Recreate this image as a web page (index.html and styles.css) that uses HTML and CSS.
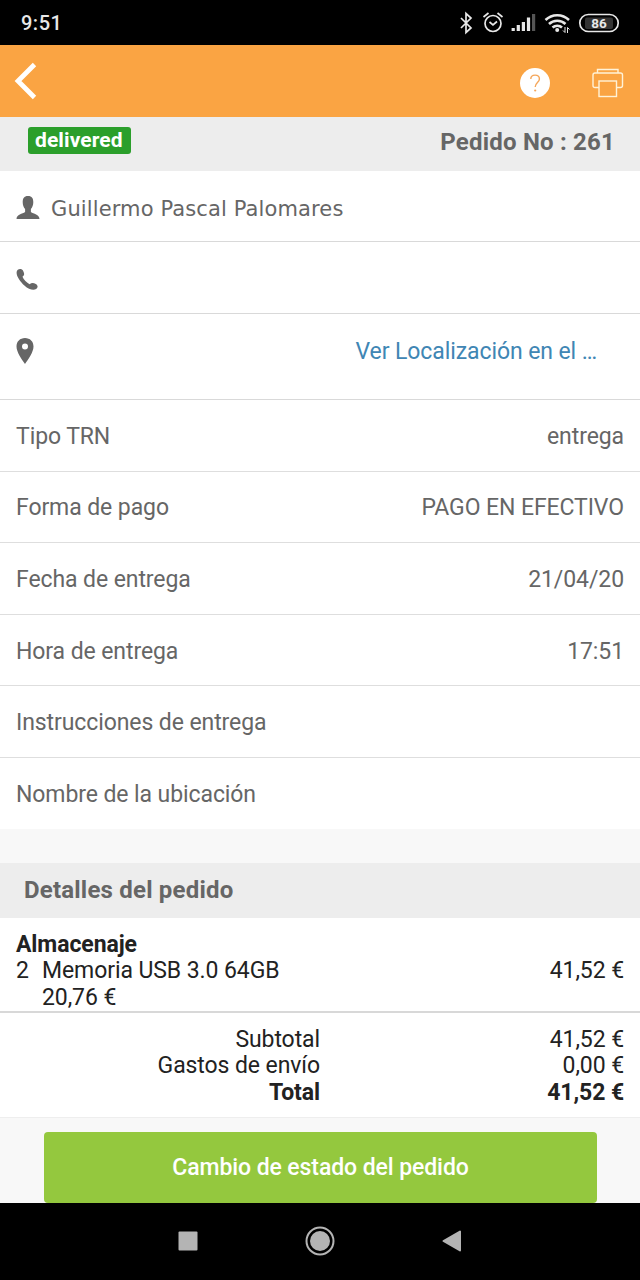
FILE: index.html
```
<!DOCTYPE html>
<html lang="es">
<head>
    <meta charset="UTF-8">
    <meta name="viewport" content="width=device-width, initial-scale=1.0">
    <title>Pedido No : 261</title>
    <link rel="stylesheet" href="styles.css">
</head>
<body>
    <div class="status-bar">
        <span class="clock">9:51</span>
        <svg class="status-icons" width="162" height="24" viewBox="0 0 162 24" fill="none" stroke="#e8e8e8" stroke-width="1.7">
            <!-- bluetooth -->
            <path d="M3 7l10 10-5 4.500V2.500L13 7 3 17"/>
            <!-- alarm -->
            <circle cx="35" cy="12.500" r="8"/>
            <path d="M31.500 11l3.500 3 4-3.500M25.500 6l5-4M39.500 2l5 4"/>
            <!-- signal -->
            <g stroke-width="3.200">
                <path d="M55.200 20v-3M60.300 20v-6M65.400 20v-9M70.500 20V6.500"/>
                <path d="M75.600 20V3" stroke="#555"/>
            </g>
            <!-- wifi -->
            <g stroke-width="2.500">
                <path d="M87.500 9c6.500-6.500 17-6.500 23.500 0M91 13c4.500-4.500 12-4.500 16.500 0M94.500 16.500c2.700-2.500 7-2.500 9.500 0"/>
            </g>
            <circle cx="99.200" cy="19" r="2" fill="#e8e8e8" stroke="none"/>
            <path d="M107 16v5.500l-2-2M109.500 22v-5.500l2 2" stroke-width="1"/>
            <!-- battery -->
            <rect x="121.800" y="3.500" width="38.400" height="17" rx="8.500"/>
            <rect x="127" y="6.500" width="28" height="11.500" rx="2" fill="#333" stroke="none"/>
            <text x="141" y="16.800" class="battery-text">86</text>
        </svg>
    </div>

    <div class="navbar">
        <svg class="back" width="24" height="40" viewBox="0 0 24 40">
            <path d="M21.500 3.500L5 20l16.500 16.500" fill="none" stroke="#fff" stroke-width="4.800"/>
        </svg>
        <div class="nav-actions">
            <svg width="30" height="30" viewBox="0 0 30 30">
                <circle cx="15" cy="15" r="15" fill="#fff"/>
                <path d="M10.800 11c0-5.200 8.600-5.200 8.600 0 0 3.500-4.200 3.700-4.200 8" fill="none" stroke="#f5a65a" stroke-width="1.400"/>
                <circle cx="15.200" cy="22.500" r="1.100" fill="#f5a65a"/>
            </svg>
            <svg width="32" height="30" viewBox="0 0 32 30" fill="none" stroke="#fff2d8" stroke-width="1.400">
                <path d="M5.500 5V1.500h20.500V5M7 19.500H3Q1 19.500 1 17.500V7q0-2 2-2h25.500q2 0 2 2v10.500q0 2-2 2H25"/>
                <rect x="7" y="13" width="17.500" height="15.500"/>
            </svg>
        </div>
    </div>

    <div class="order-header">
        <span class="badge">delivered</span>
        <span class="order-number">Pedido No : 261</span>
    </div>

    <div class="contact">
        <div class="contact-row name-row">
            <svg width="24" height="24" viewBox="0 0 24 24" fill="#666">
                <path d="M12 0c4 0 5.300 2.500 5.300 6 0 3-1 5.500-2.400 7v3c2.500 1.800 8.600 2.500 8.600 7H.5c0-4.500 6-5.200 8.600-7v-3C7.600 11.500 6.700 9 6.700 6 6.700 2.500 8 0 12 0z"/>
            </svg>
            <span class="name">Guillermo Pascal Palomares</span>
        </div>
        <div class="contact-row phone-row">
            <svg width="24" height="24" viewBox="0 0 24 24" fill="#666">
                <path d="M1.500 2C3.500.5 6 .8 7.200 3c1.400 2.700 1.300 4.300-.7 5.700 1.200 3 4.200 6 7.100 7.500 1.900-1.700 3.900-1.600 6.200-.3 2.500 1.500 2.200 3.800.3 5.200-2.600 1.800-7.400.4-11.700-3.600C3.500 13-1.500 5.500 1.500 2z"/>
            </svg>
        </div>
        <div class="contact-row address-row">
            <svg width="18" height="28" viewBox="0 0 18 28" fill="#666">
                <path fill-rule="evenodd" d="M9 1c5 0 8.500 3.500 8.500 8.500C17.500 15 12.500 22 9 27 5.500 22 .5 15 .5 9.500.5 4.500 4 1 9 1zm0 5.500a3 3 0 1 0 0 6 3 3 0 1 0 0-6z"/>
            </svg>
            <a class="map-link">Ver Localización en el …</a>
        </div>
    </div>

    <div class="info">
        <div class="info-row"><span>Tipo TRN</span><span>entrega</span></div>
        <div class="info-row"><span>Forma de pago</span><span>PAGO EN EFECTIVO</span></div>
        <div class="info-row"><span>Fecha de entrega</span><span>21/04/20</span></div>
        <div class="info-row"><span>Hora de entrega</span><span>17:51</span></div>
        <div class="info-row"><span>Instrucciones de entrega</span></div>
        <div class="info-row"><span>Nombre de la ubicación</span></div>
    </div>

    <h2 class="section-title">Detalles del pedido</h2>

    <div class="items">
        <div class="category">Almacenaje</div>
        <div class="item">
            <span class="qty">2</span>
            <span class="product">Memoria USB 3.0 64GB<br>20,76 €</span>
            <span class="price">41,52 €</span>
        </div>
    </div>

    <div class="totals">
        <span>Subtotal</span><span>41,52 €</span>
        <span>Gastos de envío</span><span>0,00 €</span>
        <strong>Total</strong><strong>41,52 €</strong>
    </div>

    <div class="actions">
        <button class="status-btn">Cambio de estado del pedido</button>
    </div>

    <div class="android-nav">
        <svg width="20" height="20" viewBox="0 0 20 20"><rect x=".5" y=".5" width="19" height="19" rx="1" fill="#b4b4b4"/></svg>
        <svg width="30" height="30" viewBox="0 0 30 30">
            <circle cx="15" cy="15" r="13.500" fill="none" stroke="#b4b4b4" stroke-width="2"/>
            <circle cx="15" cy="15" r="10" fill="#b4b4b4"/>
        </svg>
        <svg width="20" height="22" viewBox="0 0 20 22"><path d="M1.500 11L18 1.500v19z" fill="#b4b4b4" stroke="#b4b4b4" stroke-width="2" stroke-linejoin="round"/></svg>
    </div>
</body>
</html>
```
FILE: styles.css
```
* {
    box-sizing: border-box;
}
body {
    margin: 0;
    height: 1280px;
    display: flex;
    flex-direction: column;
    background-color: #f8f8f8;
    color: #666;
    font-family: Roboto, sans-serif;
    font-size: 23px;
    line-height: 27px;
    letter-spacing: -0.09px;
    overflow: hidden;
}
svg {
    display: block;
    flex-shrink: 0;
}
.status-bar {
    height: 45px;
    padding: 0 20px 0 21px;
    display: flex;
    align-items: center;
    justify-content: space-between;
    background-color: #000;
}
.clock {
    padding-top: 2px;
    color: #e8e8e8;
    font-size: 20px;
    font-weight: 500;
    letter-spacing: 0.5px;
}
.battery-text {
    fill: #e8e8e8;
    stroke: none;
    font-size: 13.5px;
    font-weight: 700;
    text-anchor: middle;
}
.navbar {
    height: 72px;
    padding: 0 16px 0 13px;
    display: flex;
    align-items: center;
    justify-content: space-between;
    background-color: #faa443;
}
.nav-actions {
    display: flex;
    align-items: center;
    gap: 42px;
    padding-top: 3px;
}
.order-header {
    height: 54px;
    padding: 10px 25px 0 28px;
    display: flex;
    align-items: flex-start;
    justify-content: space-between;
    background-color: #ededed;
    font-weight: 700;
}
.badge {
    height: 27px;
    padding: 0 8px 0 7px;
    border-radius: 3px;
    background-color: #2b9f2b;
    color: #fff;
    font-size: 21px;
    line-height: 26px;
    letter-spacing: 0.1px;
}
.order-number {
    padding-top: 2px;
    font-size: 24px;
    letter-spacing: 0.2px;
}
.contact-row {
    display: flex;
    padding: 0 16px;
    border-bottom: 1px solid #d9d9d9;
    background-color: #fff;
}
.name-row {
    height: 71px;
    padding-top: 25px;
}
.name {
    margin-left: 11px;
    font-family: "DejaVu Sans", sans-serif;
    font-size: 21px;
    letter-spacing: 0.12px;
}
.phone-row {
    height: 72px;
    padding-top: 26px;
}
.address-row {
    height: 86px;
    padding: 23px 43px 0 16px;
    justify-content: space-between;
}
.map-link {
    padding-top: 1px;
    color: #4086b4;
}
.info-row {
    height: 71.6px;
    padding: 2px 16px 0;
    display: flex;
    align-items: center;
    justify-content: space-between;
    border-bottom: 1px solid #dedede;
    background-color: #fff;
}
.info-row:last-child {
    height: 71px;
    border-bottom: none;
}
.section-title {
    height: 55px;
    margin: 34px 0 0;
    padding: 0 24px;
    background-color: #ededed;
    font-size: 24px;
    line-height: 55px;
    letter-spacing: 0.2px;
}
.items {
    height: 95px;
    padding: 14px 16px 0;
    border-bottom: 2px solid #d8d8d8;
    background-color: #fff;
    color: #222;
    line-height: 26.5px;
}
.category {
    font-weight: 700;
}
.item {
    display: flex;
}
.qty {
    width: 26px;
}
.price {
    margin-left: auto;
}
.totals {
    height: 105px;
    padding: 14px 16px 0 0;
    display: grid;
    grid-template-columns: 320px 1fr;
    align-content: start;
    border-bottom: 1px solid #eee;
    background-color: #fff;
    color: #222;
    line-height: 26.5px;
    text-align: right;
}
.actions {
    height: 85px;
    padding: 14px 43px 0 44px;
}
.status-btn {
    width: 100%;
    height: 71px;
    border: none;
    border-radius: 4px;
    background-color: #94c83e;
    color: #fff;
    font-family: inherit;
    font-size: 23px;
    font-weight: 500;
    letter-spacing: -0.09px;
}
.android-nav {
    flex: 1;
    display: flex;
    align-items: center;
    justify-content: center;
    gap: 107px;
    background-color: #000;
}
```
